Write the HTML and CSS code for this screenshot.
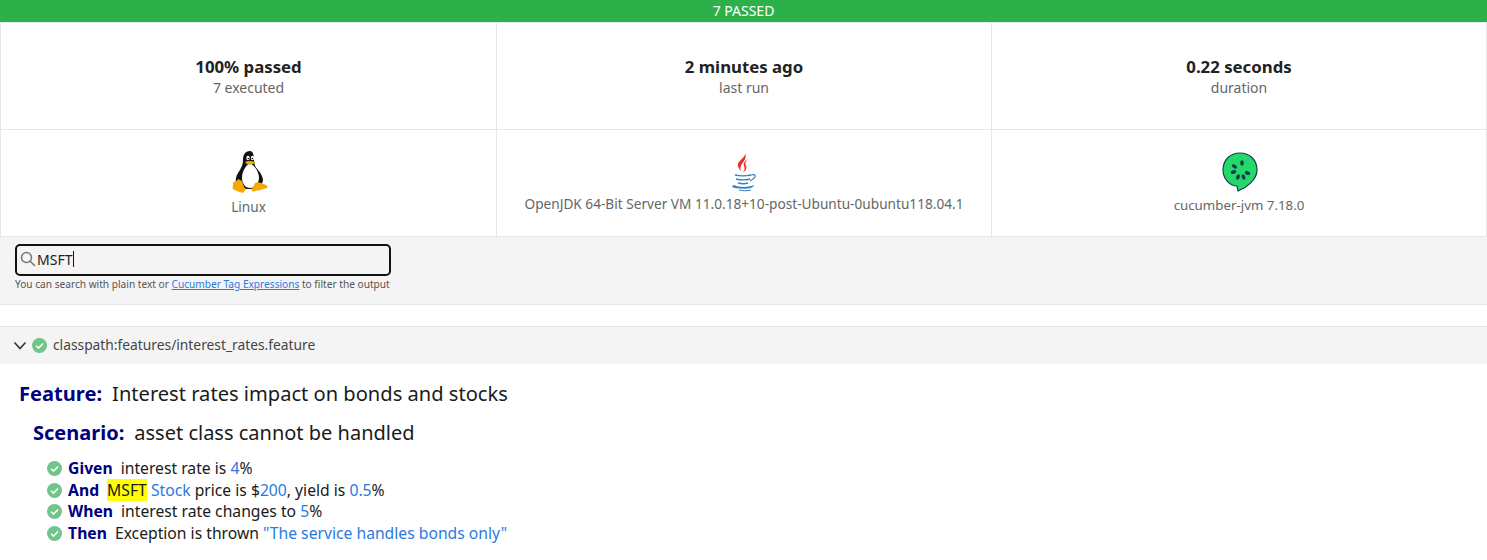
FILE: index.html
```html
<!DOCTYPE html>
<html lang="en">
<head>
    <meta charset="UTF-8">
    <title>Cucumber report</title>
    <link rel="stylesheet" href="styles.css">
</head>
<body>

<div class="status-bar">7 PASSED</div>

<div class="summary">
    <div class="cell">
        <strong>100% passed</strong>
        <span>7 executed</span>
    </div>
    <div class="cell">
        <strong>2 minutes ago</strong>
        <span>last run</span>
    </div>
    <div class="cell">
        <strong>0.22 seconds</strong>
        <span>duration</span>
    </div>
    <div class="cell env">
        <svg class="logo" width="38" height="44" viewBox="0 0 38 44">
            <path d="M20 1c-5 0-7 4-7 9 0 4-1 6-3 10-3 4-5 8-4 13l4 6h19l4-8c0-4-2-8-5-11-3-3-4-6-4-10 0-5-1-9-4-9z" fill="#111"/>
            <path d="M20 13c-5 3-8 9-8 15 0 5 3 10 8 10s9-5 9-10c0-6-4-12-9-15z" fill="#fff"/>
            <ellipse cx="18" cy="8" rx="1.700" ry="2.300" fill="#fff"/>
            <ellipse cx="22.500" cy="8" rx="1.700" ry="2.300" fill="#fff"/>
            <circle cx="18.300" cy="8.500" r=".8" fill="#111"/>
            <circle cx="22.300" cy="8.500" r=".8" fill="#111"/>
            <path d="M15 12c2-1.500 7-1.500 10 0-2 3.500-8 3.500-10 0z" fill="#f5a800"/>
            <path d="M8 29l4 2 2 6 2 2-3 4c-3-1-7-2-10-4-1-1 0-2 0-4s0-3 1-3c2-1 3-1 4-3z" fill="#f5a800"/>
            <path d="M28 32l-3 1-2 4-2 2 2 3c4-2 9-2 14-4 1-1 0-2-1-3-2-1-5-2-8-3z" fill="#f5a800"/>
        </svg>
        <span>Linux</span>
    </div>
    <div class="cell env">
        <svg class="logo" width="38" height="44" viewBox="0 0 38 44">
            <path d="M20 3c1 4-6 7-7 11-1 3 2 5 3 8-1-3-1-5 1-8 2-3 5-6 3-11z" fill="#e8312f"/>
            <path d="M23 9c-3 2-5 4-4 7 1 2 1 4-1 6 3-1 4-4 3-6s-1-4 2-7z" fill="#e8312f"/>
            <path d="M10 25c4 1 12 1 16 0M11 29c4 1 10 1 14 0M13 33c3 1 8 1 10 0" fill="none" stroke="#3b7fc0" stroke-width="1.400"/>
            <path d="M26 25c3-1 5 0 4 2s-3 3-5 4" fill="none" stroke="#3b7fc0" stroke-width="1.200"/>
            <path d="M9 35c-3 1-2 2 1 3 5 1 12 1 16 0 2-1 3-2 3-3-3 2-15 3-20 0z" fill="#3b7fc0"/>
            <path d="M14 40c4 1 8 1 12 0" fill="none" stroke="#3b7fc0" stroke-width="1"/>
        </svg>
        <span class="java-label">OpenJDK 64-Bit Server VM 11.0.18+10-post-Ubuntu-0ubuntu118.04.1</span>
    </div>
    <div class="cell env">
        <svg class="logo" width="38" height="44" viewBox="0 0 38 44">
            <path d="M20 3C10 3 3 10 3 20c0 9 7 16 14 16l1 5c8-3 19-11 19-21C37 10 30 3 20 3z" fill="#23d96c" stroke="#173b4d" stroke-width="1.200"/>
            <g fill="#173b4d">
                <ellipse cx="22" cy="13" rx="1.800" ry="2.800"/>
                <ellipse cx="14.500" cy="16.500" rx="2.800" ry="1.800" transform="rotate(30 14.500 16.500)"/>
                <ellipse cx="13.500" cy="22" rx="2.800" ry="1.800" transform="rotate(-15 13.500 22)"/>
                <ellipse cx="18" cy="27" rx="1.800" ry="2.800" transform="rotate(25 18 27)"/>
                <ellipse cx="23.500" cy="27" rx="1.800" ry="2.800" transform="rotate(-25 23.500 27)"/>
                <ellipse cx="27.500" cy="23" rx="2.800" ry="1.800" transform="rotate(20 27.500 23)"/>
            </g>
        </svg>
        <span class="cuke-label">cucumber-jvm 7.18.0</span>
    </div>
</div>

<div class="search-section">
    <div class="search-box">
        <svg width="16" height="16" viewBox="0 0 16 16" fill="none" stroke="#777" stroke-width="1.500">
            <circle cx="6.500" cy="6.500" r="5"/>
            <path d="M10 10l5 5"/>
        </svg>
        <span>MSFT</span><i class="caret"></i>
    </div>
    <p class="search-help">You can search with plain text or <a href="#">Cucumber Tag Expressions</a> to filter the output</p>
</div>

<div class="feature-header">
    <svg width="14" height="10" viewBox="0 0 14 10" fill="none" stroke="#333" stroke-width="1.600">
        <path d="M1.500 1.500L7 7.500l5.500-6"/>
    </svg>
    <svg class="check" width="15" height="15" viewBox="0 0 14 14">
        <circle cx="7" cy="7" r="7" fill="#6fc58a"/>
        <path d="M3.800 7.200l2.300 2.200 4.200-4.300" fill="none" stroke="#fff" stroke-width="1.400"/>
    </svg>
    <span>classpath:features/interest_rates.feature</span>
</div>

<div class="feature">
    <h2><b>Feature:</b>Interest rates impact on bonds and stocks</h2>
    <h3><b>Scenario:</b>asset class cannot be handled</h3>
    <ul class="steps">
        <li>
            <svg class="check" width="15" height="15" viewBox="0 0 14 14"><circle cx="7" cy="7" r="7" fill="#6fc58a"/><path d="M3.800 7.200l2.300 2.200 4.200-4.300" fill="none" stroke="#fff" stroke-width="1.400"/></svg>
            <b>Given</b>interest rate is <em>4</em>%
        </li>
        <li>
            <svg class="check" width="15" height="15" viewBox="0 0 14 14"><circle cx="7" cy="7" r="7" fill="#6fc58a"/><path d="M3.800 7.200l2.300 2.200 4.200-4.300" fill="none" stroke="#fff" stroke-width="1.400"/></svg>
            <b>And</b><mark>MSFT</mark> <em>Stock</em> price is $<em>200</em>, yield is <em>0.5</em>%
        </li>
        <li>
            <svg class="check" width="15" height="15" viewBox="0 0 14 14"><circle cx="7" cy="7" r="7" fill="#6fc58a"/><path d="M3.800 7.200l2.300 2.200 4.200-4.300" fill="none" stroke="#fff" stroke-width="1.400"/></svg>
            <b>When</b>interest rate changes to <em>5</em>%
        </li>
        <li>
            <svg class="check" width="15" height="15" viewBox="0 0 14 14"><circle cx="7" cy="7" r="7" fill="#6fc58a"/><path d="M3.800 7.200l2.300 2.200 4.200-4.300" fill="none" stroke="#fff" stroke-width="1.400"/></svg>
            <b>Then</b>Exception is thrown <em>"The service handles bonds only"</em>
        </li>
    </ul>
</div>

</body>
</html>
```

FILE: styles.css
```css
body {
    font-family: "Noto Sans", "Open Sans", sans-serif;
    margin: 0;
    color: #1a1a1a;
    background: white;
    overflow: hidden;
}
.status-bar {
    background-color: #2cb14a;
    color: white;
    text-align: center;
    font-size: 14px;
    line-height: 22px;
    height: 22px;
}
.summary {
    display: grid;
    grid-template-columns: 496px 495px 496px;
    grid-template-rows: 107px 107px;
    border-top: 1px solid #e6e6e6;
}
.cell {
    display: flex;
    flex-direction: column;
    align-items: center;
    justify-content: center;
    border-left: 1px solid #e6e6e6;
    border-bottom: 1px solid #e6e6e6;
    font-size: 14px;
    color: #666;
    box-sizing: border-box;
}
.cell:nth-child(3n) {
    border-right: 1px solid #e6e6e6;
}
.cell strong {
    font-size: 16.800px;
    line-height: 22px;
    color: #222;
}
.cell span {
    line-height: 19px;
}
.env {
    padding-bottom: 1px;
}
.env span {
    margin-top: 3px;
    font-size: 13.650px;
}
.env .java-label {
    margin-top: 0;
    padding-bottom: 3px;
}
.env .cuke-label {
    margin-top: 2px;
    padding-bottom: 1px;
    font-size: 13.300px;
}
.logo {
    display: block;
}
.search-section {
    background: #f4f4f4;
    border-bottom: 1px solid #e6e6e6;
    height: 68px;
    padding: 7px 15px 0;
    box-sizing: border-box;
}
.search-box {
    width: 376px;
    height: 32px;
    box-sizing: border-box;
    border: 2px solid #111;
    border-radius: 5px;
    display: flex;
    align-items: center;
    padding: 0 0 2px 3px;
    font-size: 14px;
    color: #222;
    gap: 1px;
}
.caret {
    display: inline-block;
    width: 1px;
    height: 16px;
    background: #111;
}
.search-help {
    margin: 2px 0 0;
    font-size: 10.150px;
    line-height: 13px;
    color: #555;
}
.search-help a {
    color: #2a7ae2;
}
.feature-header {
    margin-top: 21px;
    height: 38px;
    background: #f4f4f4;
    border-top: 1px solid #e6e6e6;
    box-sizing: border-box;
    display: flex;
    align-items: center;
    padding-left: 13px;
    font-size: 13.800px;
    color: #444;
}
.feature-header .check {
    margin: 0 6px 0 5px;
}
.feature-header span {
    padding-bottom: 2px;
}
.feature h2, .feature h3 {
    font-weight: normal;
    margin: 0;
}
.feature h2 {
    font-size: 20.100px;
    line-height: 28px;
    padding: 16px 0 0 19px;
}
.feature h3 {
    font-size: 20px;
    line-height: 26px;
    padding: 12px 0 0 33px;
}
.feature b {
    color: #000080;
    margin-right: 10px;
}
.steps {
    list-style: none;
    margin: 12px 0 0;
    padding: 0 0 0 47px;
    font-size: 15.700px;
}
.steps li {
    height: 21.500px;
    line-height: 21.500px;
    display: block;
    white-space: nowrap;
}
.steps .check {
    margin-right: 2px;
    vertical-align: -2px;
}
.steps b {
    margin-right: 8px;
}
.steps em {
    font-style: normal;
    color: #2a7ae2;
}
.steps mark {
    background: yellow;
    color: #1a1a1a;
}
```
